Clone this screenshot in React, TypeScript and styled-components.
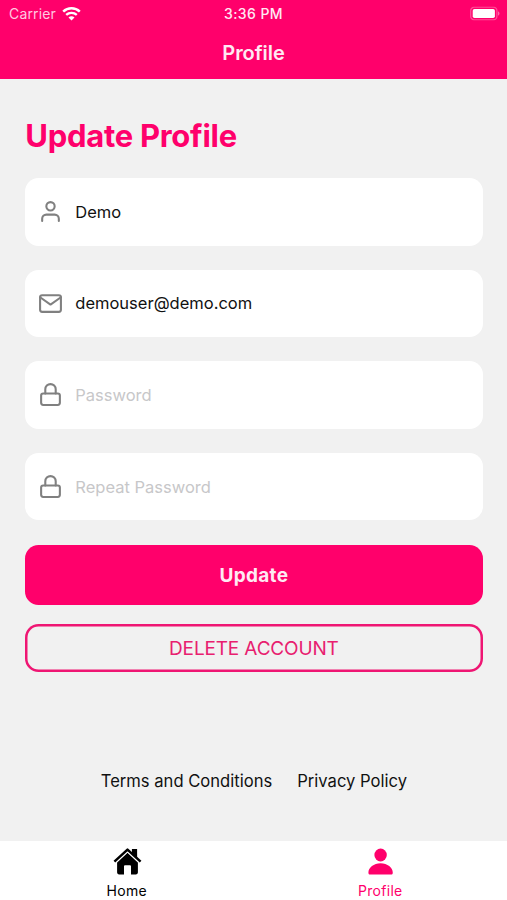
import React from 'react';
import styled, { createGlobalStyle } from 'styled-components';
import { FiLock, FiMail, FiUser } from 'react-icons/fi';

const PINK = '#ff006b';

const GlobalStyle = createGlobalStyle`
  *, *::before, *::after { box-sizing: border-box; }
  body {
    margin: 0;
    background: #f1f1f1;
    font-family: Inter, "Liberation Sans", sans-serif;
    color: #111;
  }
`;

const Screen = styled.div`
  width: 507px;
  height: 900px;
  display: flex;
  flex-direction: column;
  overflow: hidden;
  background: #f1f1f1;
`;

const Header = styled.header`
  height: 79px;
  flex: none;
  background: ${PINK};
  color: #ffe9f3;
`;

const StatusBar = styled.div`
  height: 27px;
  display: grid;
  grid-template-columns: 1fr auto 1fr;
  align-items: center;
  padding: 0 7px 0 9px;
  line-height: 27px;
  font-size: 14px;
`;

const Carrier = styled.div`
  display: flex;
  align-items: center;
  gap: 6px;
  color: #ffc9e0;
  letter-spacing: 0.15px;
`;

const Clock = styled.div`
  margin-right: 2px;
  font-weight: 500;
  letter-spacing: 0.4px;
`;

const Battery = styled.svg`
  justify-self: end;
  display: block;
  transform: translateY(-0.5px);
`;

const NavTitle = styled.h1`
  margin: 0;
  height: 52px;
  line-height: 52px;
  text-align: center;
  font-size: 20px;
  font-weight: 600;
  letter-spacing: -0.05px;
`;

const Content = styled.main`
  flex: 1;
  display: flex;
  flex-direction: column;
  padding: 37px 24.5px 0 25.3px;
`;

const Heading = styled.h2`
  margin: 0 0 22px;
  height: 40px;
  line-height: 40px;
  color: ${PINK};
  font-size: 31px;
  font-weight: 700;
  letter-spacing: -0.28px;
`;

const Fields = styled.div`
  display: flex;
  flex-direction: column;
  gap: 24px;
`;

const Field = styled.label`
  height: 67.6px;
  display: flex;
  align-items: center;
  gap: 12px;
  padding: 0 13px;
  border-radius: 13.5px;
  background: #fff;
  color: #808080;

  svg { flex: none; }
`;

const Input = styled.input`
  flex: 1;
  min-width: 0;
  padding: 0;
  border: 0;
  outline: 0;
  background: transparent;
  color: #111;
  font: 400 16.5px Inter, "Liberation Sans", sans-serif;

  &::placeholder { color: #c7c7c9; opacity: 1; }
`;

const Button = styled.button<{ $outline?: boolean }>`
  width: 100%;
  height: ${p => (p.$outline ? '48px' : '60px')};
  margin: ${p => (p.$outline ? '18.7px' : '24.6px')} 0 0;
  padding: 2px 0 0;
  border: 0;
  box-shadow: ${p => (p.$outline ? 'inset 0 0 0 2.5px #ef1673' : 'none')};
  border-radius: 13.5px;
  background: ${p => (p.$outline ? 'transparent' : PINK)};
  color: ${p => (p.$outline ? '#e8206f' : '#ffe9f3')};
  font: ${p => (p.$outline ? '400 19px' : '700 19px')} Inter, "Liberation Sans", sans-serif;
  letter-spacing: ${p => (p.$outline ? '-0.15px' : '0.3px')};
`;

const Links = styled.div`
  display: flex;
  justify-content: center;
  gap: 25px;
  margin-top: 97px;
  line-height: 24px;
  font-size: 16.6px;
`;

const Link = styled.a`
  color: #111;
  white-space: nowrap;
`;

const TabBar = styled.nav`
  height: 59px;
  flex: none;
  display: grid;
  grid-template-columns: 1fr 1fr;
  background: #fff;
`;

const Tab = styled.a<{ $active?: boolean }>`
  display: flex;
  flex-direction: column;
  align-items: center;
  padding-top: 4px;
  color: ${p => (p.$active ? PINK : '#000')};
  font-size: 14px;
  font-weight: 400;
  letter-spacing: 0.3px;
  line-height: 18px;
`;

const TabIcon = styled.span`
  height: 33px;
  display: flex;
  align-items: center;
  margin: 0 0 4px 1px;
`;

const fields = [
  { Icon: FiUser, type: 'text', value: 'Demo', hint: 'Name' },
  { Icon: FiMail, type: 'email', value: 'demouser@demo.com', hint: 'Email' },
  { Icon: FiLock, type: 'password', value: '', hint: 'Password' },
  { Icon: FiLock, type: 'password', value: '', hint: 'Repeat Password' },
];

function WifiIcon() {
  return (
    <svg width="19" height="14" viewBox="0 0 19 14" fill="none" stroke="#fff">
      <path d="M1.2 4.6C5.8.2 13.2.2 17.8 4.6" strokeWidth="2.5" />
      <path d="M4.2 7.9c3-2.7 7.6-2.7 10.6 0" strokeWidth="2.4" />
      <path d="M9.5 13.4 6.5 10.4c1.7-1.4 4.3-1.4 6 0Z" fill="#fff" stroke="none" />
    </svg>
  );
}

function HomeIcon() {
  return (
    <svg width="29" height="27" viewBox="0 0 29 27">
      <path d="M4.1 14.2 14.5 4.4l10.4 9.8v10.4a1.8 1.8 0 0 1-1.8 1.8H18v-8.2a1 1 0 0 0-1-1h-5a1 1 0 0 0-1 1v8.2H5.9a1.8 1.8 0 0 1-1.8-1.8Z" fill="currentColor" />
      <path d="m1.4 14.2 13.1-12.2 13.1 12.2" fill="none" stroke="#fff" strokeWidth="4" />
      <path d="m1.4 13.6 13.1-12 13.1 12" fill="none" stroke="currentColor" strokeWidth="2.5" strokeLinejoin="round" />
      <path d="M18.9 1h5.2v9.4l-5.2-4.8Z" fill="currentColor" />
    </svg>
  );
}

function PersonIcon() {
  return (
    <svg width="26" height="28" viewBox="0 0 26 28" fill="currentColor">
      <ellipse cx="12.6" cy="7" rx="6.2" ry="6.5" />
      <path d="M12.6 15.3c6.8 0 12.2 4.3 12.2 9.4 0 1.2-.7 1.9-1.8 1.9H2.2C1.1 26.6.4 25.9.4 24.7c0-5.1 5.4-9.4 12.2-9.4Z" />
    </svg>
  );
}

export default function App() {
  return (
    <Screen>
      <GlobalStyle />
      <Header>
        <StatusBar>
          <Carrier>Carrier <WifiIcon /></Carrier>
          <Clock>3:36 PM</Clock>
          <Battery width="30" height="14" viewBox="0 0 30 14">
            <rect x=".7" y=".7" width="26.2" height="12.6" rx="3.6" fill="none" stroke="#fff" strokeOpacity=".3" strokeWidth="1.3" />
            <rect x="2.7" y="2.5" width="22.2" height="9" rx="1.8" fill="#fff" />
            <path d="M28 4.8c2 .8 2 3.6 0 4.4Z" fill="#fff" fillOpacity=".4" />
          </Battery>
        </StatusBar>
        <NavTitle>Profile</NavTitle>
      </Header>
      <Content>
        <Heading>Update Profile</Heading>
        <Fields>
          {fields.map(({ Icon, type, value, hint }) => (
            <Field key={hint}>
              <Icon size={25} />
              <Input type={type} defaultValue={value} placeholder={hint} />
            </Field>
          ))}
        </Fields>
        <Button>Update</Button>
        <Button $outline>DELETE ACCOUNT</Button>
        <Links>
          <Link>Terms and Conditions</Link>
          <Link>Privacy Policy</Link>
        </Links>
      </Content>
      <TabBar>
        <Tab>
          <TabIcon><HomeIcon /></TabIcon>
          Home
        </Tab>
        <Tab $active>
          <TabIcon><PersonIcon /></TabIcon>
          Profile
        </Tab>
      </TabBar>
    </Screen>
  );
}
